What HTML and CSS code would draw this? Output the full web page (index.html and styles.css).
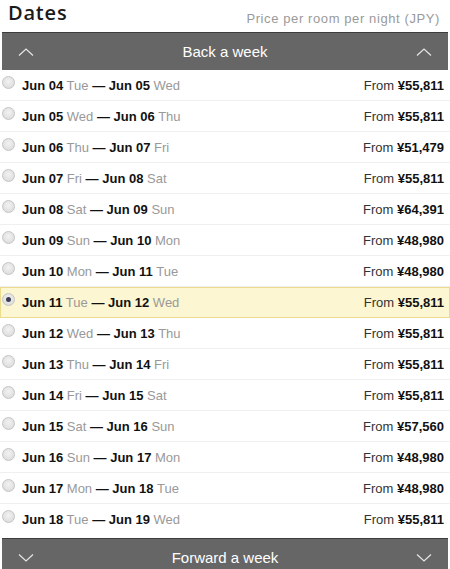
FILE: index.html
```html
<!DOCTYPE html>
<html lang="en">
<head>
  <meta charset="UTF-8" />
  <meta name="viewport" content="width=device-width, initial-scale=1" />
  <title>Dates</title>
  <link rel="stylesheet" href="styles.css">
</head>
<body>
  <div class="header">
    <h1>Dates</h1>
    <span class="note">Price per room per night (JPY)</span>
  </div>
  <div class="week-bar">
    <svg class="chev" viewBox="0 0 16 8"><polyline points="1,7.5 8,1 15,7.5" /></svg>
    <span>Back a week</span>
    <svg class="chev" viewBox="0 0 16 8"><polyline points="1,7.5 8,1 15,7.5" /></svg>
  </div>
  <ul class="dates" id="dates"></ul>
  <div class="week-bar">
    <svg class="chev" viewBox="0 0 16 8"><polyline points="1,0.5 8,7 15,0.5" /></svg>
    <span>Forward a week</span>
    <svg class="chev" viewBox="0 0 16 8"><polyline points="1,0.5 8,7 15,0.5" /></svg>
  </div>
  <script>
    const days = ['Sun', 'Mon', 'Tue', 'Wed', 'Thu', 'Fri', 'Sat'];
    const prices = ['55,811', '55,811', '51,479', '55,811', '64,391', '48,980', '48,980',
      '55,811', '55,811', '55,811', '55,811', '57,560', '48,980', '48,980', '55,811'];
    const list = document.getElementById('dates');
    const pad = (n) => String(n).padStart(2, '0');
    for (let i = 0; i < 15; i++) {
      const d = 4 + i;
      const li = document.createElement('li');
      li.className = 'row' + (d === 11 ? ' selected' : '');
      li.innerHTML = `
        <span class="radio"></span>
        <span class="range"><b>Jun ${pad(d)}</b> <span class="day">${days[(d + 5) % 7]}</span> <b>—</b> <b>Jun ${pad(d + 1)}</b> <span class="day">${days[(d + 6) % 7]}</span></span>
        <span class="price">From <b>¥${prices[i]}</b></span>
      `;
      list.appendChild(li);
    }
  </script>
</body>
</html>
```

FILE: styles.css
```css
body {
  margin: 0;
  background: #fff;
  font-family: "Liberation Sans", Arial, sans-serif;
  color: #222;
}
.header {
  display: flex;
  justify-content: space-between;
  align-items: flex-end;
  height: 32px;
  padding: 0 10px 0 8px;
  box-sizing: border-box;
}
.header h1 {
  margin: 0;
  font-family: "Open Sans", sans-serif;
  font-size: 20px;
  font-weight: 600;
  letter-spacing: 0.8px;
  color: #1a1a1a;
  line-height: 26px;
  align-self: flex-start;
}
.note {
  font-size: 13px;
  color: #9a9a9a;
  letter-spacing: 0.6px;
  padding-bottom: 6px;
}
.week-bar {
  display: flex;
  align-items: center;
  justify-content: space-between;
  margin: 0 2px;
  height: 38px;
  padding: 0 16px;
  background: #666;
  border-top: 1px solid #3c3c3c;
  box-sizing: border-box;
  color: #fff;
  font-size: 15px;
}
.chev {
  width: 16px;
  height: 8px;
  fill: none;
  stroke: #e6e6e6;
  stroke-width: 1.2;
}
.dates {
  list-style: none;
  margin: 0 0 3px;
  padding: 0;
}
.row {
  display: flex;
  align-items: center;
  height: 31px;
  padding: 0 6px 0 2px;
  box-sizing: border-box;
  border-bottom: 1px solid #f0f0f0;
  font-size: 13px;
}
.row:last-child {
  border-bottom: none;
}
.row.selected {
  background: #fdf6d2;
  border: 1px solid #eadc8c;
  padding-left: 1px;
  padding-right: 5px;
}
.radio {
  width: 11px;
  height: 11px;
  border-radius: 50%;
  border: 1px solid #c4c4c4;
  background: radial-gradient(circle at 50% 40%, #f2f2f2, #d8d8d8);
  margin-right: 7px;
  position: relative;
  margin-top: -6px;
}
.selected .radio::after {
  content: "";
  position: absolute;
  left: 3px;
  top: 3px;
  width: 5px;
  height: 5px;
  border-radius: 50%;
  background: #3e3e52;
}
.range {
  flex: 1;
  color: #111;
}
.range b {
  font-weight: 700;
}
.day {
  color: #999;
}
.price {
  color: #333;
}
.price b {
  color: #111;
}
```
